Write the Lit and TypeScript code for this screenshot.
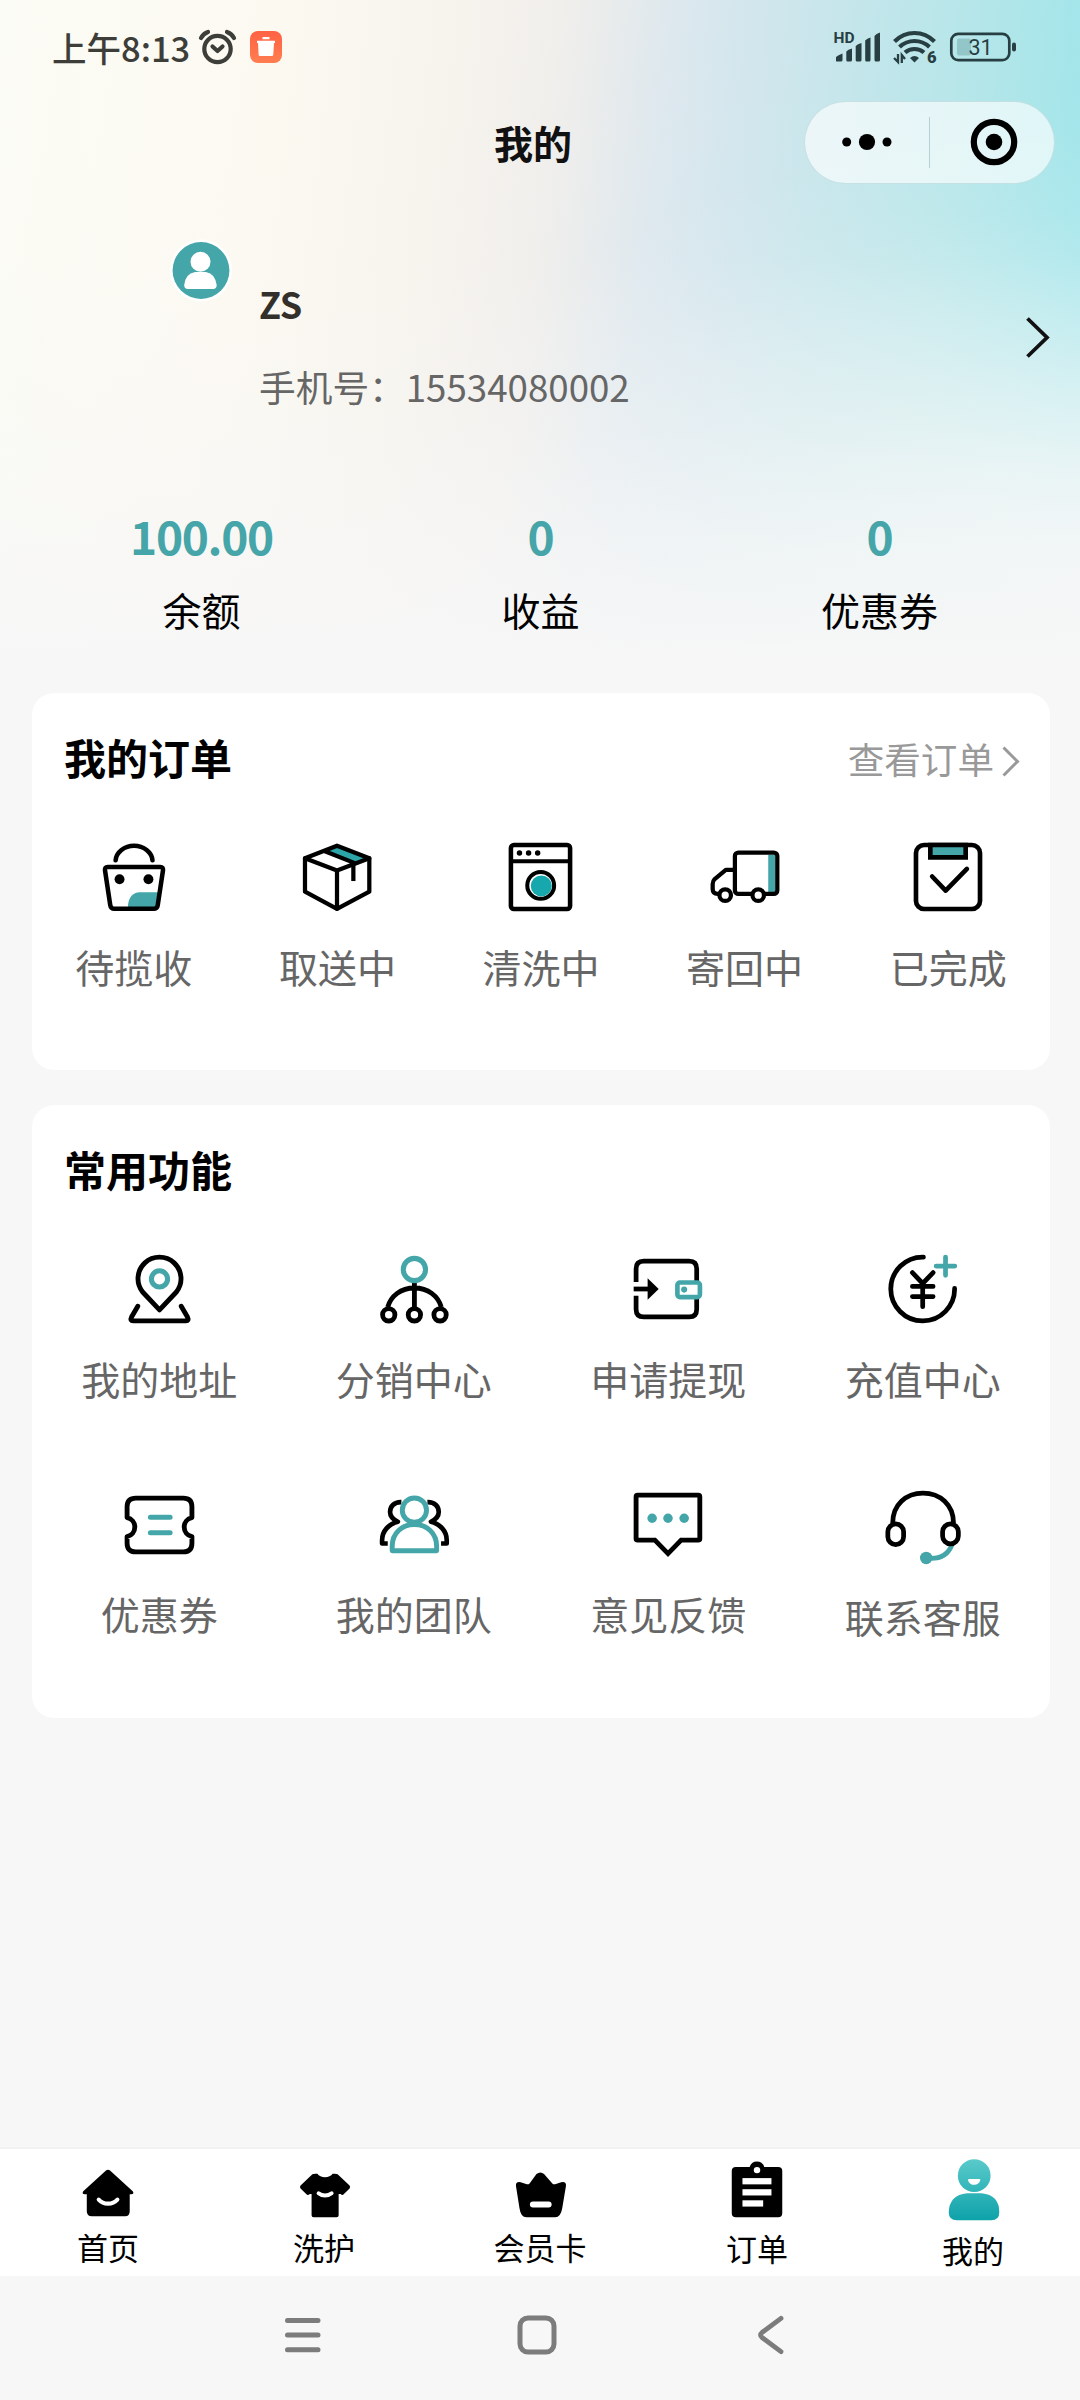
import { LitElement, html, svg, css } from "lit";
import { customElement, property } from "lit/decorators.js";

const K = "#000";
const T = "#45a6a9";

const icons: Record<string, unknown> = {
  bag: svg`
    <path d="M28 64C28 54 33 49 39.500 49H60L57 64Z" fill=${T}/>
    <g fill="none" stroke=${K} stroke-width="4.500" stroke-linecap="round">
      <path d="M8 24H60Q63.200 24 62.700 27.500L57.500 62Q57 65.500 53.500 65.500H14.500Q11 65.500 10.500 62L5.300 27.500Q4.800 24 8 24Z"/>
      <path d="M15.800 17.500A18.300 15.500 0 0 1 52.300 17.500"/>
    </g>
    <circle cx="19.700" cy="36.300" r="4.900"/><circle cx="48.300" cy="36.300" r="4.900"/>`,
  box: svg`
    <path d="M25 7.500L34 4L63 15.500L51 20Z" fill="#2ba5a8"/>
    <g fill="none" stroke=${K} stroke-width="4.200" stroke-linejoin="round" stroke-linecap="round">
      <path d="M34 3L66 15.500V48.500L34 65.500L2.300 48.500V15.500Z"/>
      <path d="M2.300 15.500L34 27.500L66 15.500M34 27.500V65.500M22 8.500L51 20"/>
      <path d="M50.200 20V38" stroke-linecap="butt"/>
    </g>`,
  washer: svg`
    <rect x="4.200" y="2.300" width="58.600" height="63.400" rx="3" fill="none" stroke=${K} stroke-width="4.500"/>
    <path d="M4 18.500H63" stroke=${K} stroke-width="4"/>
    <circle cx="12.700" cy="10.300" r="2.700"/><circle cx="21.700" cy="10.300" r="2.700"/><circle cx="30.700" cy="10.300" r="2.700"/>
    <circle cx="33.700" cy="42.300" r="13.300" fill="#fff" stroke=${K} stroke-width="4"/>
    <circle cx="34.300" cy="42.800" r="10.400" fill="#16a8ad"/>`,
  truck: svg`
    <rect x="57" y="12" width="7" height="38" fill=${T}/>
    <g fill="none" stroke=${K} stroke-width="4.200" stroke-linejoin="round">
      <rect x="24" y="9.800" width="42" height="41" rx="3.500"/>
      <path d="M24 27H15L4 36Q2 38 2 41V46Q2 50.800 7 50.800H10"/>
      <circle cx="14.400" cy="52" r="5.700" fill="#fff"/><circle cx="47.100" cy="52" r="5.700" fill="#fff"/>
    </g>`,
  done: svg`
    <g fill="none" stroke=${K} stroke-width="4.600" stroke-linecap="round" stroke-linejoin="round">
      <rect x="2.300" y="2.300" width="63.400" height="63.400" rx="8"/>
      <path d="M16.500 2.300H51.500V14.600H16.500Z" fill=${T} stroke-linejoin="miter"/>
      <path d="M18.300 33.500L31.700 47.500L52.700 26"/>
    </g>`,
  pin: svg`
    <g fill="none" stroke=${K} stroke-width="4.800" stroke-linecap="round" stroke-linejoin="round">
      <path d="M34.500 54.700L17.800 37A21.300 21.300 0 1 1 51.200 37Z"/>
      <path d="M13 51L6.800 61.800Q5 65.500 8.500 65.500H60.500Q64 65.500 62.200 61.800L56 51"/>
      <circle cx="34.500" cy="24" r="8" stroke=${T} stroke-width="5"/>
    </g>`,
  share: svg`
    <g fill="none" stroke=${K} stroke-width="4.800">
      <path d="M34.400 27V52M8 52C11 41 21 33 34.400 33S58 41 61 52"/>
      <circle cx="9" cy="59.600" r="6.100"/><circle cx="34.400" cy="59.600" r="6.100"/><circle cx="59.800" cy="59.600" r="6.100"/>
      <circle cx="34.400" cy="14.700" r="11" stroke=${T} stroke-width="5"/>
    </g>`,
  withdraw: svg`
    <g fill="none" stroke=${K} stroke-width="4.700">
      <path d="M2.400 27V14Q2.400 6.400 10 6.400H55Q62.400 6.400 62.400 14V27"/>
      <path d="M2.400 40.700V54Q2.400 61.600 10 61.600H55Q62.400 61.600 62.400 54V44"/>
      <path d="M0 34H15"/>
    </g>
    <path d="M13.800 23.300L24.800 34L13.800 44.700Z"/>
    <rect x="43.300" y="27.600" width="22.300" height="14.400" rx="2.500" fill="#fff" stroke=${T} stroke-width="4.600"/>
    <circle cx="50" cy="34.600" r="3" fill=${T}/>`,
  recharge: svg`
    <g fill="none" stroke=${K} stroke-width="4.700" stroke-linecap="round">
      <path d="M34.400 2.400A31.600 31.600 0 1 0 65.300 33.500"/>
      <path d="M23.500 17.800L33.700 28.500L44 17.800M33.700 28.500V51.500M23.500 31.500H44M23.500 41.500H44"/>
      <path d="M47 11.300H65.500M56.300 2.400V20.500" stroke=${T}/>
    </g>`,
  ticket: svg`
    <path d="M2.400 27.600V17Q2.400 8.400 11 8.400H58Q66.600 8.400 66.600 17V27.600A9.600 9.600 0 0 0 66.600 46.400V53Q66.600 61.600 58 61.600H11Q2.400 61.600 2.400 53V46.400A9.600 9.600 0 0 0 2.400 27.600Z" fill="none" stroke=${K} stroke-width="4.800" stroke-linejoin="round"/>
    <path d="M25.500 27.300H45M25.500 42.700H45" stroke=${T} stroke-width="5" stroke-linecap="round"/>`,
  team: svg`
    <g fill="none" stroke=${K} stroke-width="4.600" stroke-linecap="butt" stroke-linejoin="round">
      <path d="M21.500 12.300C14 12 10.300 17 10.300 22C10.300 26 12.500 29 18 31.800C9 34 2.400 41 2.400 50V53.300H8"/>
      <path d="M47.300 12.300C54.800 12 58.500 17 58.500 22C58.500 26 56.300 29 50.800 31.800C59.800 34 66.400 41 66.400 50V53.300H60.800"/>
      <g stroke=${T} stroke-width="4.900">
        <circle cx="34.400" cy="20.300" r="12"/>
        <path d="M12.400 60.500V56C12.400 43 22 34.500 34.400 34.500S56.400 43 56.400 56V60.500Z"/>
      </g>
    </g>`,
  feedback: svg`
    <path d="M2.400 7Q2.400 5.400 4 5.400H63.900Q65.500 5.400 65.500 7V48.700Q65.500 50 63.900 50H47L34 63.300L21 50H4Q2.400 50 2.400 48.700Z" fill="none" stroke=${K} stroke-width="4.800"/>
    <g fill=${T}><circle cx="18.300" cy="28.300" r="4.700"/><circle cx="34" cy="28.300" r="4.700"/><circle cx="50" cy="28.300" r="4.700"/></g>`,
  service: svg`
    <path d="M65.500 54C62 63 54 68 42 67" fill="none" stroke=${T} stroke-width="4.800"/>
    <circle cx="40.200" cy="66.600" r="6.200" fill=${T}/>
    <g fill="none" stroke=${K} stroke-width="4.700">
      <path d="M7 32C7 14 20 2.400 37 2.400S67.200 14 67.200 32"/>
      <rect x="2.200" y="33" width="15.600" height="20.400" rx="7.800"/>
      <rect x="56.400" y="33" width="15.600" height="19.700" rx="7.800"/>
    </g>`,
  home: svg`
    <path d="M29 12.800Q31 11.200 33 12.800L55.500 33.200Q57.300 36.200 54 36.200H52.500V53Q52.500 58 48 58H15Q10 58 10 53V36.200H8Q4.800 36.200 6.500 33.200Z"/>
    <path d="M21.800 41.500C26.500 46.800 35.500 46.800 40.300 41.500" fill="none" stroke="#fff" stroke-width="4" stroke-linecap="round"/>`,
  tee: svg`
    <path d="M19.500 16.500Q21 15.500 24.500 16C27 20.500 37 20.500 39.500 16Q43 15.500 44.500 16.500L56.300 27.500Q57.500 29 56.300 30.500L50.500 36.300Q49 37.500 47.500 36H45.500V57Q45.500 59 43.500 59H20.700Q18.700 59 18.700 57V36H17Q15 37.500 13.600 36.300L7.800 30.500Q6.500 29 7.800 27.500Z"/>
    <path d="M25.600 35.200C29 38.200 35 38.200 38.600 35.200" fill="none" stroke="#fff" stroke-width="3.800" stroke-linecap="round"/>`,
  crown: svg`
    <path d="M27.500 16.200Q31.500 13 35 16.200L43.200 25.500Q44.700 27 46.700 26L52 24.200Q57.200 23.200 56.700 28L53 50Q51.500 59 46 59H17.500Q12 59 10.700 50L7.200 28Q6.700 23.200 11.900 24.200L17.200 26Q19.200 27 20.700 25.500Z"/>
    <path d="M24 46.300H39.500" stroke="#fff" stroke-width="6" stroke-linecap="round"/>`,
  order: svg`
    <path d="M11 9.300H24.700A7.500 7.500 0 0 1 39.200 9.300H53Q57 9.300 57 13.300V55Q57 59 53 59H11Q7 59 7 55V13.300Q7 9.300 11 9.300Z"/>
    <g fill="#fff"><circle cx="32" cy="12.300" r="3.200"/>
    <rect x="17.600" y="20.200" width="28.700" height="6.200"/><rect x="17.600" y="31.200" width="28.700" height="6.200"/><rect x="17.600" y="42.200" width="20.500" height="6.200"/></g>`,
  me: svg`
    <defs><linearGradient id="g" x1="0" y1="0" x2="0" y2="62" gradientUnits="userSpaceOnUse">
      <stop offset="0" stop-color="#5ccbcb"/><stop offset="1" stop-color="#0ea2aa"/></linearGradient></defs>
    <g fill="url(#g)"><circle cx="33.200" cy="17.800" r="16.200"/>
    <path d="M26 35.300H40.500Q58 37 58 54Q58 62 50 62H16Q8 62 8 54Q8.500 37 26 35.300Z"/></g>
    <path d="M27 22Q27 21 28.500 21H38Q39.500 21 39.300 22.200C38 28.500 28.500 28.500 27 22Z" fill="#fff"/>`,
};

@customElement("line-icon")
class LineIcon extends LitElement {
  @property() name = "";
  @property({ type: Number }) size = 68;
  static styles = css`
    :host { display: block; flex: none; }
    svg { display: block; overflow: visible; transform: scale(1.01); }
  `;
  render() {
    return html`<svg width=${this.size} height=${this.size} viewBox="0 0 ${this.size} ${this.size}">${icons[this.name]}</svg>`;
  }
}

@customElement("app-root")
class AppRoot extends LitElement {
  static styles = css`
    :host {
      display: block;
      width: 1080px;
      height: 2400px;
      font-family: "Noto Sans CJK SC", "Noto Sans", sans-serif;
      color: #000;
    }
    svg { display: block; flex: none; overflow: visible; }
    .page {
      display: flex;
      flex-direction: column;
      width: 1080px;
      height: 2400px;
      overflow: hidden;
      background: #f7f7f7;
    }
    .top {
      height: 693px;
      background:
        linear-gradient(to bottom, rgba(247,247,247,0) 0, rgba(247,247,247,.05) 260px, rgba(247,247,247,.35) 430px, rgba(247,247,247,.7) 550px, #f7f7f7 670px),
        radial-gradient(ellipse 720px 460px at 1080px 580px, rgba(247,247,247,.85) 0, rgba(247,247,247,.68) 25%, rgba(247,247,247,.36) 53%, rgba(247,247,247,.1) 80%, rgba(247,247,247,0) 100%),
        linear-gradient(97deg, #fbfcf5 0, #fcf9f1 24%, #f7f4ed 38%, #f1efec 48%, #e8ebec 53%, #dde8ee 58%, #d2e6ed 65%, #c5e6eb 73%, #b5e6e9 84%, #9de5ea 96%);
    }
    .status {
      display: flex;
      align-items: center;
      height: 94px;
      padding: 0 64px 0 52px;
      color: #3d3e39;
    }
    .time { width: 147px; font-size: 34.500px; line-height: 50px; font-weight: 500; white-space: nowrap; }
    .trash { margin-left: 13px; }
    .signal { margin-left: auto; }
    .wifi { margin-left: 12px; }
    .battery { margin-left: 14px; }
    .nav {
      display: flex;
      align-items: center;
      justify-content: space-between;
      height: 96px;
      padding: 0 25px 0 494px;
    }
    .title { font-size: 39px; line-height: 58px; font-weight: 700; color: #111; }
    .capsule {
      display: flex;
      align-items: center;
      box-sizing: border-box;
      width: 251px;
      height: 83px;
      border-radius: 42px;
      border: 1px solid rgba(170,205,210,.55);
      background: rgba(255,255,255,.64);
    }
    .half { flex: 1; display: flex; justify-content: center; }
    .divider { width: 1px; height: 51px; background: rgba(150,185,190,.6); }
    .profile {
      display: flex;
      align-items: flex-start;
      height: 226px;
      padding: 49px 30px 0 170px;
    }
    .who { display: flex; flex-direction: column; gap: 29px; margin: 37px 0 0 27px; }
    .name { font-size: 36px; line-height: 54px; font-weight: 700; color: #33302b; }
    .phone { font-size: 36.700px; line-height: 55px; color: #666; }
    .go { margin: 77px 0 0 auto; }
    .stats {
      display: grid;
      grid-template-columns: repeat(3, 339px);
      padding: 40px 0 0 32px;
      text-align: center;
    }
    .num { font-size: 46px; line-height: 60px; font-weight: 700; letter-spacing: -1.300px; color: #45a5a8; }
    .lab { margin-top: 19px; font-size: 39px; line-height: 50px; }
    .card {
      box-sizing: border-box;
      width: 1018px;
      margin: 0 0 0 32px;
      padding-top: 33px;
      border-radius: 22px;
      background: #fff;
    }
    .orders { height: 377px; }
    .tools { height: 613px; margin-top: 35px; }
    .head { display: flex; justify-content: space-between; height: 60px; padding: 0 30px 0 32px; }
    .h { font-size: 42px; line-height: 62px; font-weight: 700; }
    .more { display: flex; align-items: center; gap: 8px; padding-top: 6px; font-size: 36.600px; line-height: 60px; color: #999; }
    .more svg { margin-top: 3px; }
    .grid { display: grid; margin-top: 57px; }
    .five { grid-template-columns: repeat(5, 203.600px); }
    .four { grid-template-columns: repeat(4, 254.500px); row-gap: 87px; }
    .cell { display: flex; flex-direction: column; align-items: center; }
    .cell .text { margin-top: 30px; font-size: 39px; line-height: 50px; color: #666; white-space: nowrap; }
    .service line-icon { margin: 1px 0 -4px; }
    .spacer { flex: 1; }
    .tabs {
      display: grid;
      grid-template-columns: repeat(5, 1fr);
      height: 127px;
      border-top: 2px solid #f2f2f2;
      background: #fff;
    }
    .tab { display: flex; flex-direction: column; align-items: center; padding-top: 9px; }
    .tab .text { margin-top: 9px; font-size: 31px; line-height: 36px; }
    .tab.order .text { margin: 10px 0 0 2px; }
    .tab.me .text { margin: 12px 0 0 2px; }
    .system { display: flex; justify-content: center; align-items: center; gap: 197px; height: 124px; padding: 0 3px 6px 0; box-sizing: border-box; }
  `;

  orders = [["bag", "待揽收"], ["box", "取送中"], ["washer", "清洗中"], ["truck", "寄回中"], ["done", "已完成"]];
  tools = [
    ["pin", "我的地址"], ["share", "分销中心"], ["withdraw", "申请提现"], ["recharge", "充值中心"],
    ["ticket", "优惠券"], ["team", "我的团队"], ["feedback", "意见反馈"], ["service", "联系客服"],
  ];
  tabs = [["home", "首页"], ["tee", "洗护"], ["crown", "会员卡"], ["order", "订单"], ["me", "我的"]];
  stats = [["100.00", "余额"], ["0", "收益"], ["0", "优惠券"]];

  cell([icon, text]: string[]) {
    return html`<div class="cell ${icon}">
      <line-icon name=${icon} size=${icon === "service" ? 74 : 68}></line-icon>
      <div class="text">${text}</div>
    </div>`;
  }

  render() {
    return html`<div class="page">
      <div class="top">
        <div class="status">
          <div class="time">上午8:13</div>
          <svg width="38" height="36" viewBox="0 0 38 36" fill="none" stroke="#3d3e39" stroke-width="4.200" stroke-linecap="round" stroke-linejoin="round">
            <circle cx="18.500" cy="20" r="13.200"/>
            <path d="M13.500 17.500L18.500 22L23.500 17.500"/>
            <path d="M2 9Q4.500 4.500 9 3M35 9Q32.500 4.500 28 3"/>
          </svg>
          <svg class="trash" width="32" height="32" viewBox="0 0 32 32">
            <defs><linearGradient id="o" x1="0" y1="0" x2="0" y2="1"><stop offset="0" stop-color="#ff6244"/><stop offset="1" stop-color="#ff7d50"/></linearGradient></defs>
            <rect width="32" height="32" rx="8" fill="url(#o)"/>
            <path d="M12.500 6H19.500V8.200H12.500ZM7 9.800H25V12H24L23.300 23.500Q23.200 25 21.800 25H10Q8.700 25 8.600 23.500L8 12H7Z" fill="#fff"/>
          </svg>
          <svg class="signal" width="47" height="32" viewBox="0 0 47 32" fill="#273f43">
            <text x="-0.500" y="11.500" font-family="Roboto, sans-serif" font-size="15.500" font-weight="700">HD</text>
            <path d="M2 30V26Q4 24 8.500 22.500V29Q8.500 30.500 7 30.500H2.500ZM12.300 20.500Q14 18.500 18 17.500V29Q18 30.500 16.500 30.500H13.500Q12.300 30.500 12.300 29ZM21.700 15Q23.500 13 27.500 12V29Q27.500 30.500 26 30.500H23Q21.700 30.500 21.700 29ZM31.200 9.500Q33 7.500 36.500 6.500V29Q36.500 30.500 35 30.500H32.500Q31.200 30.500 31.200 29ZM40.500 5Q42 2.500 46 1.500V29Q46 30.500 44.500 30.500H42Q40.500 30.500 40.500 29Z"/>
          </svg>
          <svg class="wifi" width="43" height="34" viewBox="0 0 43 34" fill="none" stroke="#273f43" stroke-width="4.200">
            <path d="M1.500 11.500Q10 3 21.500 3T41.500 11.500"/>
            <path d="M6.500 17Q13 11 21.500 11T36.500 17"/>
            <path d="M12 22.500Q16 19 21.500 19T31 22.500"/>
            <path d="M17 28Q21.500 24 26 28L21.500 32.500Z" fill="#273f43" stroke="none"/>
            <path d="M5 24V32L1 28M8.800 33V25L12 29" stroke-width="2.300"/>
            <text x="34" y="33" fill="#273f43" stroke="none" font-family="Roboto, sans-serif" font-size="16.500" font-weight="900">6</text>
          </svg>
          <svg class="battery" width="66" height="30" viewBox="0 0 66 30">
            <rect x="7" y="6.500" width="14" height="17" rx="2" fill="#93c6c8"/>
            <rect x="1.300" y="1.800" width="58" height="26.400" rx="7" fill="none" stroke="#273f43" stroke-width="2.700"/>
            <rect x="62" y="10.500" width="4" height="9" rx="2" fill="#273f43"/>
            <text x="30.500" y="22.700" text-anchor="middle" font-family="Roboto, sans-serif" font-size="21.500" fill="#273f43">31</text>
          </svg>
        </div>
        <div class="nav">
          <div class="title">我的</div>
          <div class="capsule">
            <div class="half">
              <svg width="50" height="18" viewBox="0 0 50 18"><circle cx="4.700" cy="9" r="4.500"/><circle cx="25" cy="9" r="8.100"/><circle cx="45" cy="9" r="4.500"/></svg>
            </div>
            <div class="divider"></div>
            <div class="half">
              <svg width="48" height="48" viewBox="0 0 48 48"><circle cx="26" cy="24" r="20.200" fill="none" stroke="#000" stroke-width="6.200"/><circle cx="26" cy="24" r="8.300"/></svg>
            </div>
          </div>
        </div>
        <div class="profile">
          <svg width="62" height="62" viewBox="0 0 62 62">
            <circle cx="31" cy="31.500" r="31" fill="#fff"/>
            <circle cx="31" cy="31.500" r="28.400" fill="#45a6a9"/>
            <circle cx="30.500" cy="22.700" r="10" fill="#fff"/>
            <path d="M25 33H36Q45 34.500 46.700 46Q46.700 50 43 50H18Q14.200 50 14.200 46Q15.500 34.500 25 33Z" fill="#fff"/>
          </svg>
          <div class="who">
            <div class="name">ZS</div>
            <div class="phone">手机号：15534080002</div>
          </div>
          <svg class="go" width="24" height="42" viewBox="0 0 24 42"><path d="M1.500 2.500L21 21.500L1.500 40.500" fill="none" stroke="#111" stroke-width="3.800"/></svg>
        </div>
        <div class="stats">
          ${this.stats.map(([n, l]) => html`<div><div class="num">${n}</div><div class="lab">${l}</div></div>`)}
        </div>
      </div>
      <div class="card orders">
        <div class="head">
          <div class="h">我的订单</div>
          <div class="more">查看订单<svg width="18" height="30" viewBox="0 0 18 30"><path d="M1.500 1.500L15.500 15.500L1.500 29.500" fill="none" stroke="#999" stroke-width="3"/></svg></div>
        </div>
        <div class="grid five">${this.orders.map((o) => this.cell(o))}</div>
      </div>
      <div class="card tools">
        <div class="head"><div class="h">常用功能</div></div>
        <div class="grid four">${this.tools.map((o) => this.cell(o))}</div>
      </div>
      <div class="spacer"></div>
      <div class="tabs">
        ${this.tabs.map(([i, t]) => html`<div class="tab ${i}"><line-icon name=${i} size="62"></line-icon><div class="text">${t}</div></div>`)}
      </div>
      <div class="system">
        <svg width="38" height="40" viewBox="0 0 38 40"><path d="M3.500 5.500H34M3.500 20H34M3.500 34.700H34" stroke="#7c7c7c" stroke-width="5" stroke-linecap="round"/></svg>
        <svg width="39" height="40" viewBox="0 0 39 40"><rect x="1" y="3" width="34" height="34" rx="8" fill="none" stroke="#7c7c7c" stroke-width="5"/></svg>
        <svg width="38" height="40" viewBox="0 0 38 40"><path d="M26 3.300L7 17.500Q4 20 7 22.500L26 36.700" fill="none" stroke="#7c7c7c" stroke-width="4.800" stroke-linecap="round"/></svg>
      </div>
    </div>`;
  }
}
